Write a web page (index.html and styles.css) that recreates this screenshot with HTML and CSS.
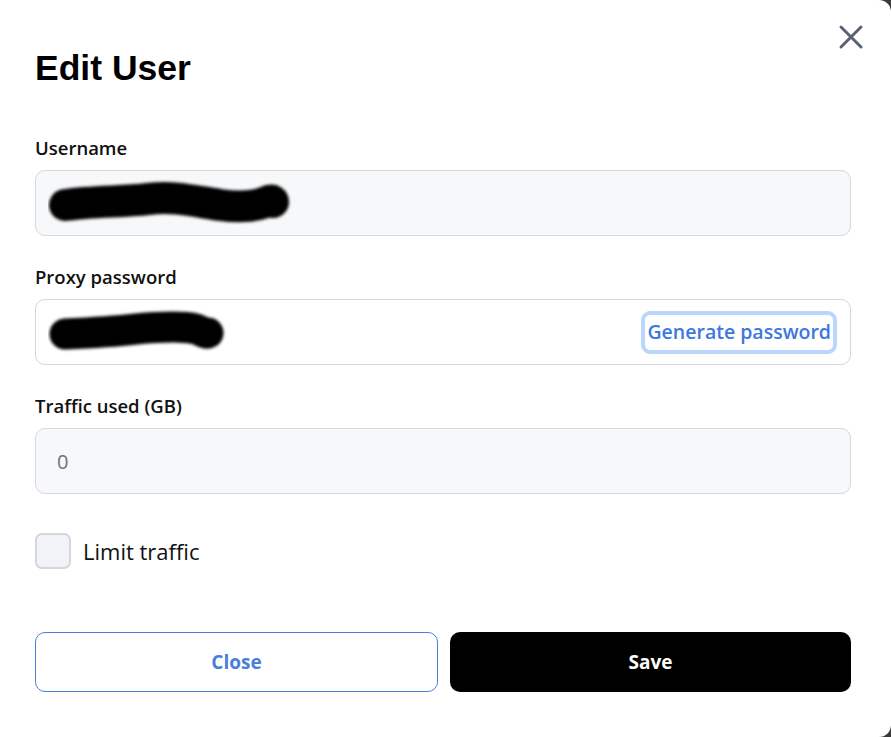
FILE: index.html
```html
<!DOCTYPE html>
<html lang="en">
<head>
    <meta charset="UTF-8">
    <meta name="viewport" content="width=device-width, initial-scale=1.0">
    <title>Edit User</title>
    <link rel="stylesheet" href="styles.css">
</head>
<body>
    <div class="modal">
        <button class="close-icon" aria-label="Close">
            <svg width="26" height="26" viewBox="0 0 26 26">
                <path d="M3 3 L23 23 M23 3 L3 23" stroke="#5b6175" stroke-width="3" stroke-linecap="round" fill="none"/>
            </svg>
        </button>
        <h1 class="title">Edit User</h1>

        <form class="form">
            <div class="field">
                <label class="label">Username</label>
                <div class="box box-muted">
                    <!-- redacted value -->
                    <svg class="redact" width="260" height="50" viewBox="0 0 260 50">
                        <defs>
                            <filter id="blur1" filterUnits="userSpaceOnUse" x="0" y="0" width="260" height="50">
                                <feGaussianBlur stdDeviation="1.6"/>
                            </filter>
                        </defs>
                        <path d="M17 27 C45 23 75 24 100 21 C128 18 145 23 172 27 C195 30 208 28 218 24 C222 22 225 22 225 24" stroke="#000" stroke-width="32" stroke-linecap="round" fill="none" filter="url(#blur1)"/>
                    </svg>
                </div>
            </div>

            <div class="field">
                <label class="label">Proxy password</label>
                <div class="box box-pass">
                    <svg class="redact" width="200" height="50" viewBox="0 0 200 50">
                        <defs>
                            <filter id="blur2" filterUnits="userSpaceOnUse" x="0" y="0" width="200" height="50">
                                <feGaussianBlur stdDeviation="1.6"/>
                            </filter>
                        </defs>
                        <path d="M17 27 C40 26 62 25 88 22 C110 20 135 19 148 22 C156 25 158 27 160 26" stroke="#000" stroke-width="31" stroke-linecap="round" fill="none" filter="url(#blur2)"/>
                    </svg>
                    <button type="button" class="gen-btn">Generate password</button>
                </div>
            </div>

            <div class="field">
                <label class="label">Traffic used (GB)</label>
                <input class="box box-muted input" type="text" placeholder="0">
            </div>

            <div class="check-row">
                <span class="checkbox"></span>
                <span class="check-label">Limit traffic</span>
            </div>

            <div class="actions">
                <button type="button" class="btn btn-outline">Close</button>
                <button type="submit" class="btn btn-dark">Save</button>
            </div>
        </form>
    </div>
</body>
</html>
```

FILE: styles.css
```css
/* Base */
body {
    margin: 0;
    background: #3a3a3a;
    font-family: 'Open Sans', 'Noto Sans', sans-serif;
}

.modal {
    position: relative;
    box-sizing: border-box;
    width: 891px;
    height: 737px;
    background: #fff;
    border-radius: 0 12px 12px 0;
    padding: 46px 40px 45px 35px;
}

.close-icon {
    position: absolute;
    top: 24px;
    right: 27px;
    padding: 0;
    border: none;
    background: none;
    cursor: pointer;
}

.title {
    margin: 0 0 46px;
    font-family: 'Liberation Sans', Arial, sans-serif;
    font-size: 35.5px;
    line-height: 44px;
    font-weight: 700;
    color: #000;
}

/* Fields */
.field {
    margin-bottom: 29px;
}

.label {
    display: block;
    margin-bottom: 10px;
    font-size: 18.5px;
    line-height: 24px;
    font-weight: 600;
    color: #111;
}

.box {
    box-sizing: border-box;
    display: flex;
    align-items: center;
    justify-content: space-between;
    width: 100%;
    height: 66px;
    padding: 0 14px 0 12px;
    border: 1px solid #d4d7de;
    border-radius: 10px;
    background: #fff;
}

.box-muted {
    background: #f7f8fa;
}

.box-pass {
    padding-right: 13px;
}

.redact {
    display: block;
}

.input {
    padding-left: 21px;
    font-family: inherit;
    font-size: 20px;
    color: #111;
    outline: none;
}

.input::placeholder {
    color: #6b7280;
}

.gen-btn {
    padding: 4px 2px 5px;
    border: 4px solid #bcd5fb;
    border-radius: 9px;
    background: #fff;
    font-family: inherit;
    font-size: 19.5px;
    line-height: 26px;
    font-weight: 600;
    color: #3c78dd;
    cursor: pointer;
}

/* Checkbox */
.check-row {
    display: flex;
    align-items: center;
    gap: 12px;
    margin-top: 39px;
}

.checkbox {
    box-sizing: border-box;
    width: 36px;
    height: 36px;
    border: 2px solid #d3d6dd;
    border-radius: 7px;
    background: #f1f3f8;
}

.check-label {
    font-size: 22px;
    color: #111;
}

/* Buttons */
.actions {
    display: flex;
    gap: 12px;
    margin-top: 63px;
}

.btn {
    flex: 1;
    height: 60px;
    border-radius: 10px;
    font-family: inherit;
    font-size: 19px;
    font-weight: 700;
    cursor: pointer;
}

.btn-outline {
    border: 1px solid #4a7fd8;
    background: #fff;
    color: #4a7fd8;
}

.btn-dark {
    border: none;
    background: #000;
    color: #fff;
}
```
